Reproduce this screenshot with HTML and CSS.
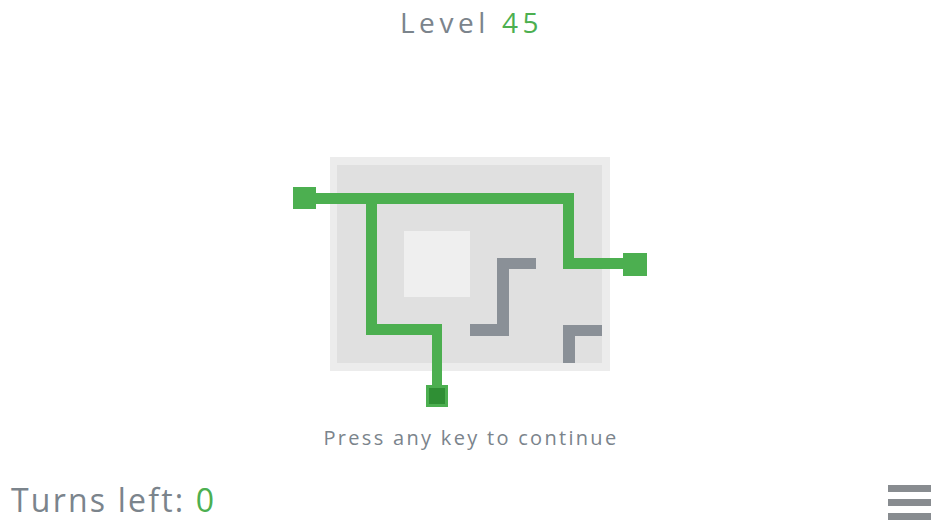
FILE: index.html
```html
<!DOCTYPE html>
<html>
<head>
<meta charset="utf-8">
<link rel="stylesheet" href="styles.css">
</head>
<body>
<div class="page">
  <header class="title">Level <span class="accent">45</span></header>
  <main class="stage">
    <svg class="board" width="360" height="256" viewBox="290 155 360 256" xmlns="http://www.w3.org/2000/svg">
      <rect x="330" y="157" width="280" height="214" fill="#ececec"/>
      <rect x="337" y="165" width="265" height="198" fill="#e0e0e0"/>
      <rect x="404" y="231" width="66" height="66" fill="#efefef"/>
      <g fill="#8a9097">
        <rect x="497" y="258" width="39" height="11"/>
        <rect x="497" y="258" width="12" height="78"/>
        <rect x="470" y="324" width="39" height="12"/>
        <rect x="563" y="325" width="39" height="11"/>
        <rect x="563" y="325" width="12" height="38"/>
      </g>
      <g fill="#4caf50">
        <rect x="293" y="187" width="23" height="22"/>
        <rect x="316" y="193" width="258" height="11"/>
        <rect x="366" y="193" width="11" height="142"/>
        <rect x="366" y="324" width="76" height="11"/>
        <rect x="432" y="324" width="10" height="61"/>
        <rect x="563" y="193" width="11" height="76"/>
        <rect x="563" y="258" width="60" height="11"/>
        <rect x="623" y="253" width="24" height="23"/>
        <rect x="426" y="385" width="22" height="22"/>
      </g>
      <rect x="429" y="388" width="16" height="16" fill="#2f8f34"/>
    </svg>
    <p class="prompt">Press any key to continue</p>
  </main>
  <footer class="footer">
    <div class="turns">Turns left: <span class="accent">0</span></div>
    <div class="menu" aria-label="menu">
      <span class="bar"></span>
      <span class="bar"></span>
      <span class="bar"></span>
    </div>
  </footer>
</div>
</body>
</html>
```

FILE: styles.css
```css
html, body {
  margin: 0;
  padding: 0;
  background: #ffffff;
}
.page {
  width: 940px;
  height: 529px;
  display: flex;
  flex-direction: column;
  font-family: "Open Sans", "Lato", sans-serif;
  color: #7b848c;
  overflow: hidden;
}
.accent {
  color: #4caf50;
}
.title {
  font-size: 28px;
  line-height: 40px;
  height: 40px;
  padding-top: 2px;
  padding-left: 3px;
  text-align: center;
  letter-spacing: 4.6px;
}
.stage {
  display: flex;
  flex-direction: column;
  align-items: center;
  padding-top: 113px;
}
.board {
  display: block;
}
.prompt {
  margin: 15px 0 0 0;
  padding-left: 2px;
  font-size: 20px;
  line-height: 24px;
  letter-spacing: 2.3px;
}
.footer {
  margin-top: auto;
  display: flex;
  justify-content: space-between;
  align-items: center;
  padding: 0 9px 9px 11px;
}
.turns {
  font-size: 32px;
  line-height: 40px;
  letter-spacing: 2.2px;
}
.menu {
  display: flex;
  flex-direction: column;
  gap: 7px;
  padding-top: 6px;
}
.bar {
  display: block;
  width: 43px;
  height: 7px;
  background: #888c90;
}
```
